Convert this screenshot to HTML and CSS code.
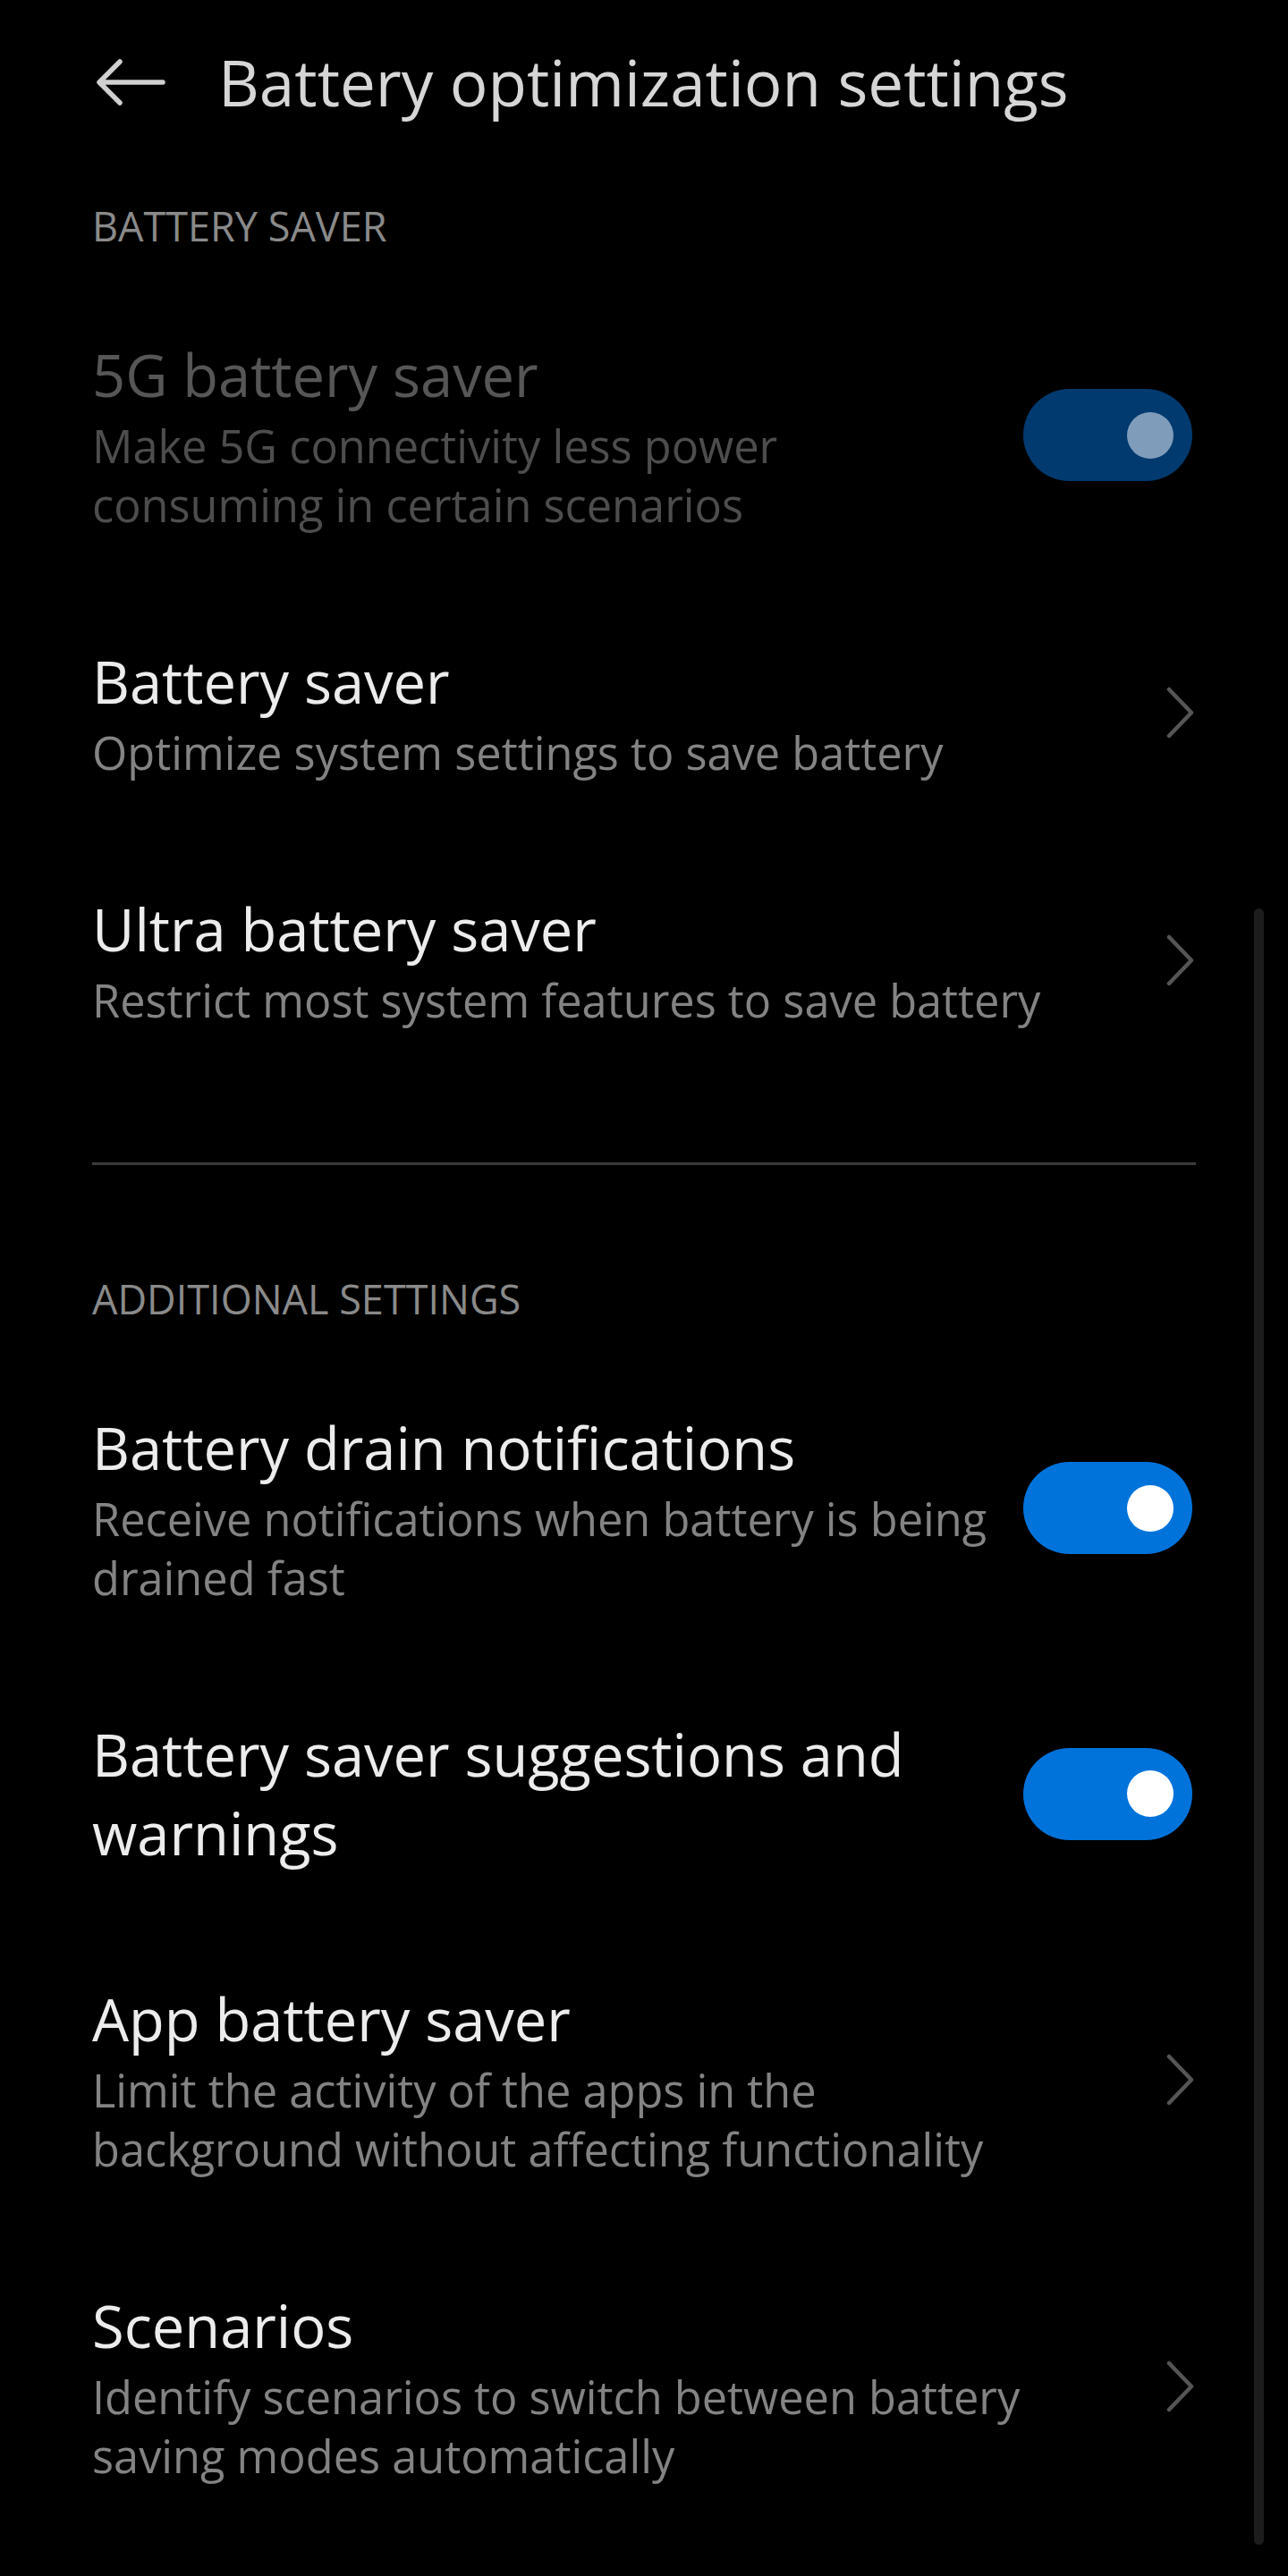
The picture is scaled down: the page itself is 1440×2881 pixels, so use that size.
FILE: index.html
```html
<!DOCTYPE html>
<html lang="en">
<head>
    <meta charset="UTF-8">
    <meta name="viewport" content="width=device-width, initial-scale=1.0">
    <title>Battery optimization settings</title>
    <link rel="stylesheet" href="styles.css">
</head>
<body>
    <div class="screen">
        <header class="toolbar">
            <svg class="back" width="80" height="54" viewBox="0 0 80 54">
                <path d="M76 27H6M28 4L5 27l23 23" fill="none" stroke="#d0d0d0" stroke-width="5.5" stroke-linecap="round" stroke-linejoin="round"/>
            </svg>
            <h1>Battery optimization settings</h1>
        </header>

        <div class="section-title">BATTERY SAVER</div>

        <div class="row disabled">
            <div class="text">
                <div class="title">5G battery saver</div>
                <div class="sub">Make 5G connectivity less power<br>consuming in certain scenarios</div>
            </div>
            <div class="toggle"><span class="knob"></span></div>
        </div>

        <div class="row">
            <div class="text">
                <div class="title">Battery saver</div>
                <div class="sub">Optimize system settings to save battery</div>
            </div>
            <div class="chevron">
                <svg width="32" height="58" viewBox="0 0 32 58"><path d="M3 3l25 26L3 55" fill="none" stroke="#555" stroke-width="4.5" stroke-linecap="round" stroke-linejoin="round"/></svg>
            </div>
        </div>

        <div class="row">
            <div class="text">
                <div class="title">Ultra battery saver</div>
                <div class="sub">Restrict most system features to save battery</div>
            </div>
            <div class="chevron">
                <svg width="32" height="58" viewBox="0 0 32 58"><path d="M3 3l25 26L3 55" fill="none" stroke="#555" stroke-width="4.5" stroke-linecap="round" stroke-linejoin="round"/></svg>
            </div>
        </div>

        <hr class="divider">

        <div class="section-title">ADDITIONAL SETTINGS</div>

        <div class="row">
            <div class="text">
                <div class="title">Battery drain notifications</div>
                <div class="sub">Receive notifications when battery is being<br>drained fast</div>
            </div>
            <div class="toggle on"><span class="knob"></span></div>
        </div>

        <div class="row">
            <div class="text">
                <div class="title">Battery saver suggestions and<br>warnings</div>
            </div>
            <div class="toggle on"><span class="knob"></span></div>
        </div>

        <div class="row">
            <div class="text">
                <div class="title">App battery saver</div>
                <div class="sub">Limit the activity of the apps in the<br>background without affecting functionality</div>
            </div>
            <div class="chevron">
                <svg width="32" height="58" viewBox="0 0 32 58"><path d="M3 3l25 26L3 55" fill="none" stroke="#555" stroke-width="4.5" stroke-linecap="round" stroke-linejoin="round"/></svg>
            </div>
        </div>

        <div class="row">
            <div class="text">
                <div class="title">Scenarios</div>
                <div class="sub">Identify scenarios to switch between battery<br>saving modes automatically</div>
            </div>
            <div class="chevron">
                <svg width="32" height="58" viewBox="0 0 32 58"><path d="M3 3l25 26L3 55" fill="none" stroke="#555" stroke-width="4.5" stroke-linecap="round" stroke-linejoin="round"/></svg>
            </div>
        </div>

        <div class="scrollbar"></div>
    </div>
</body>
</html>
```

FILE: styles.css
```css
body {
    margin: 0;
    background: #000;
    font-family: "Open Sans", "Noto Sans", sans-serif;
}
.screen {
    position: relative;
    min-height: 2881px;
    overflow: hidden;
}
.toolbar {
    height: 184px;
    display: flex;
    align-items: center;
    padding-left: 106px;
}
.back {
    margin-right: 58px;
}
h1 {
    margin: 0;
    font-size: 71px;
    font-weight: 400;
    color: #d6d6d6;
    line-height: 100px;
}
.section-title {
    padding: 39px 103px 0;
    margin-bottom: 32px;
    font-size: 45px;
    line-height: 60px;
    color: #8a8a8a;
}
.divider + .section-title {
    padding-top: 0;
}
.row {
    display: flex;
    align-items: center;
    padding: 60px 107px 60px 103px;
}
.text {
    flex: 1;
}
.title {
    font-size: 65px;
    line-height: 88px;
    color: #ececec;
}
.sub {
    margin-top: 3px;
    font-size: 50.5px;
    line-height: 66px;
    color: #838383;
    white-space: nowrap;
}
.disabled .title {
    color: #565656;
}
.disabled .sub {
    color: #4d4d4d;
}
.toggle {
    width: 189px;
    height: 103px;
    border-radius: 52px;
    background: #003a6f;
    margin-left: 36px;
    display: flex;
    align-items: center;
    justify-content: flex-end;
    padding-right: 21px;
    box-sizing: border-box;
    flex-shrink: 0;
}
.knob {
    width: 52px;
    height: 52px;
    border-radius: 50%;
    background: #7f9dba;
}
.toggle.on {
    background: #0073db;
}
.toggle.on .knob {
    background: #fff;
}
.chevron {
    width: 170px;
    display: flex;
    justify-content: flex-end;
    flex-shrink: 0;
}
.chevron svg {
    display: block;
    margin-right: -3px;
}
.divider {
    border: none;
    height: 3px;
    background: #3b3b3b;
    margin: 88px 103px 120px;
}
.scrollbar {
    position: absolute;
    left: 1402px;
    top: 1016px;
    width: 11px;
    height: 1830px;
    border-radius: 6px;
    background: #1d1d1d;
}
```
